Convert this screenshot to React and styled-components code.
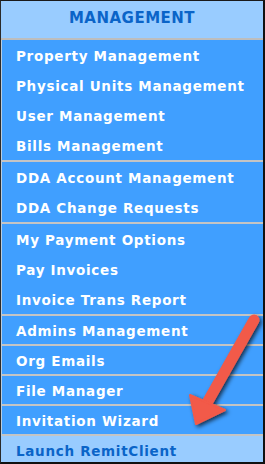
import React from "react";
import styled, { createGlobalStyle } from "styled-components";

const GlobalStyle = createGlobalStyle`
	html, body {
		margin: 0;
		padding: 0;
		background: #ffffff;
	}
`;

const Panel = styled.div`
	position: relative;
	box-sizing: border-box;
	width: 265px;
	height: 464px;
	border-top: 1px solid #1a1a1a;
	border-left: 1px solid #2a2a2a;
	border-right: 2px solid #111;
	border-bottom: 2px solid #111;
	background: #99ccff;
	overflow: hidden;
	font-family: "DejaVu Sans", Verdana, sans-serif;
`;

const Header = styled.div`
	box-sizing: border-box;
	height: 39px;
	padding-bottom: 4px;
	display: flex;
	align-items: center;
	justify-content: center;
	background: #99ccff;
	border-bottom: 2px solid #bdbdbd;
	color: #0a64c8;
	font-size: 15px;
	font-weight: bold;
	letter-spacing: 0.5px;
`;

const Group = styled.div`
	display: flex;
	flex-direction: column;
	background: #409fff;
	border-left: 1px solid #b9cde0;
	border-bottom: ${(p) => (p.$last ? "none" : "2px solid #c4c4c4")};
`;

const Item = styled.div`
	box-sizing: border-box;
	height: 30px;
	padding: 2px 0 0 14px;
	display: flex;
	align-items: center;
	color: #ffffff;
	font-size: 13.5px;
	font-weight: bold;
	letter-spacing: 0.7px;
	white-space: nowrap;
	border-bottom: ${(p) => (p.$lined ? "2px solid #c4c4c4" : "none")};
`;

const Footer = styled.div`
	box-sizing: border-box;
	height: 26px;
	padding: 4px 0 0 15px;
	display: flex;
	align-items: center;
	background: #99ccff;
	color: #0a64c8;
	font-size: 13.5px;
	font-weight: bold;
	letter-spacing: 0.7px;
	white-space: nowrap;
`;

const Arrow = styled.svg`
	position: absolute;
	left: 0;
	top: 0;
	pointer-events: none;
`;

const groups = [
	["Property Management", "Physical Units Management", "User Management", "Bills Management"],
	["DDA Account Management", "DDA Change Requests"],
	["My Payment Options", "Pay Invoices", "Invoice Trans Report"],
];

const lastGroup = ["Admins Management", "Org Emails", "File Manager", "Invitation Wizard"];

export default function App() {
	return (
		<>
			<GlobalStyle />
			<Panel>
				<Header>MANAGEMENT</Header>
				{groups.map((g, i) => (
					<Group key={i}>
						{g.map((label) => (
							<Item key={label}>{label}</Item>
						))}
					</Group>
				))}
				<Group $last>
					{lastGroup.map((label) => (
						<Item key={label} $lined>
							{label}
						</Item>
					))}
				</Group>
				<Footer>Launch RemitClient</Footer>
				<Arrow width="265" height="464" viewBox="0 0 265 464">
					<defs>
						<filter id="shadow" x="-30%" y="-30%" width="160%" height="160%">
							<feDropShadow dx="2" dy="2" stdDeviation="2" floodColor="#000" floodOpacity="0.7" />
						</filter>
					</defs>
					<g filter="url(#shadow)" fill="#f25a48" stroke="#f25a48">
						<line x1="253" y1="319" x2="206" y2="402" strokeWidth="11" strokeLinecap="round" />
						<polygon points="195,423 189,394 224,409" strokeWidth="2" strokeLinejoin="round" />
					</g>
				</Arrow>
			</Panel>
		</>
	);
}
